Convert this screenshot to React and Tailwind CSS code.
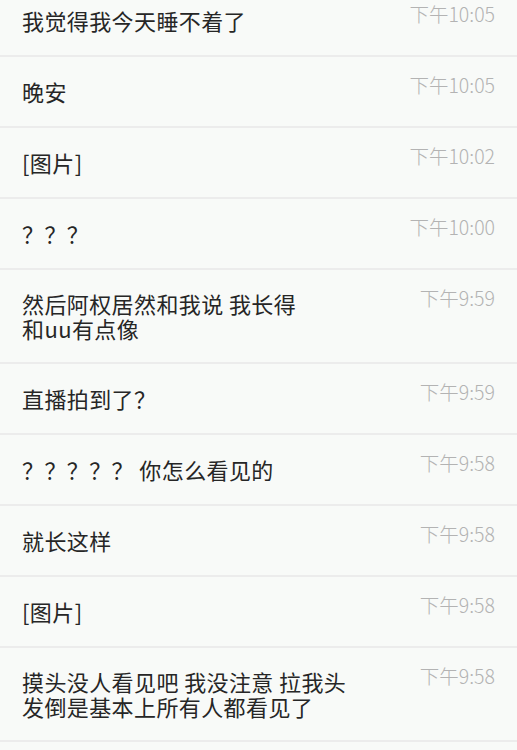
const messages = [
  { lines: ['我觉得我今天睡不着了'], time: '下午10:05' },
  { lines: ['晚安'], time: '下午10:05' },
  { lines: ['[图片]'], time: '下午10:02' },
  { lines: ['？？？'], time: '下午10:00' },
  { lines: ['然后阿权居然和我说 我长得', '和uu有点像'], time: '下午9:59' },
  { lines: ['直播拍到了？'], time: '下午9:59' },
  { lines: ['？？？？？ 你怎么看见的'], time: '下午9:58' },
  { lines: ['就长这样'], time: '下午9:58' },
  { lines: ['[图片]'], time: '下午9:58' },
  { lines: ['摸头没人看见吧 我没注意 拉我头', '发倒是基本上所有人都看见了'], time: '下午9:58' },
  { lines: [''], time: '' },
]

function Row({ m }) {
  const tall = m.lines.length > 1
  return (
    <div className={`flex items-start justify-between pl-[22px] pr-[22px] border-b-2 border-[#ececec] ${tall ? 'h-[94px]' : 'h-[71px]'}`}>
      <div className="self-center text-[22px] leading-[25px] text-[#262626] tracking-[0.4px]">
        {m.lines.map((l, i) => (
          <div key={i}>{l}</div>
        ))}
      </div>
      <div className="pt-[18px] text-[19.5px] leading-[20px] text-[#b3b3b3] font-light whitespace-nowrap">
        {m.time}
      </div>
    </div>
  )
}

export default function App() {
  return (
    <div
      className="w-[517px] h-[750px] overflow-hidden bg-[#f8faf8]"
      style={{ fontFamily: '"Noto Sans CJK SC", "Noto Sans", sans-serif' }}
    >
      <div className="-mt-[14px]">
        {messages.map((m, i) => (
          <Row key={i} m={m} />
        ))}
      </div>
    </div>
  )
}
